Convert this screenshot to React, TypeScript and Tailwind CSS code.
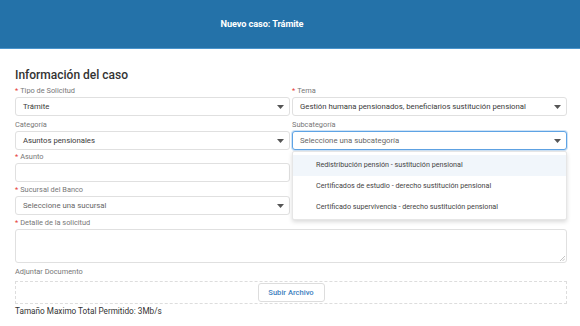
import React from "react";

const font = { fontFamily: "Roboto, 'Liberation Sans', sans-serif" };

function Label({ text, req }: { text: string; req?: boolean }) {
	return (
		<div className="h-[10px] mb-[1px] flex items-center text-[7.4px] leading-none text-[#777]">
			{req ? <span className="text-[#e53935] mr-[2px]">*</span> : null}
			{text}
		</div>
	);
}

function Arrow() {
	return (
		<svg width="7" height="4" viewBox="0 0 7 4" className="shrink-0">
			<path d="M0 0h7L3.5 4z" fill="#555" />
		</svg>
	);
}

function Select({
	value,
	placeholder,
	focused,
}: {
	value?: string;
	placeholder?: string;
	focused?: boolean;
}) {
	return (
		<div
			className={
				"h-[19px] rounded-[3px] border bg-white flex items-center justify-between pl-[7px] pr-[5px] text-[7.75px] " +
				(focused
					? "border-[#5ea3e4] shadow-[0_0_0_1px_#cfe3f6]"
					: "border-[#e0e0e0]")
			}
		>
			<span className={value ? "text-[#3a3a3a]" : "text-[#666]"}>
				{value ?? placeholder}
			</span>
			<Arrow />
		</div>
	);
}

export default function App() {
	const options = [
		"Redistribución pensión - sustitución pensional",
		"Certificados de estudio - derecho sustitución pensional",
		"Certificado supervivencia - derecho sustitución pensional",
	];

	return (
		<div className="w-[580px] h-[326px] bg-white overflow-hidden" style={font}>
			<div className="h-[49px] bg-[#2472a9] border-b border-[#4a94cc] flex items-center justify-center pr-[56px]">
				<h1 className="text-white font-bold text-[9.2px] tracking-[-0.1px]">
					Nuevo caso: Trámite
				</h1>
			</div>

			<div className="pl-[15px] pr-[13px]">
				<h2 className="mt-[19px] h-[14px] leading-[14px] text-[12px] font-medium text-[#333]">
					Información del caso
				</h2>

				<div className="grid grid-cols-2 gap-x-[2px] mt-[4px]">
					<div>
						<Label text="Tipo de Solicitud" req />
						<Select value="Trámite" />
					</div>
					<div>
						<Label text="Tema" req />
						<Select value="Gestión humana pensionados, beneficiarios sustitución pensional" />
					</div>

					<div className="mt-[4px]">
						<Label text="Categoría" />
						<Select value="Asuntos pensionales" />
					</div>
					<div className="mt-[4px] relative">
						<Label text="Subcategoría" />
						<Select placeholder="Seleccione una subcategoría" focused />
						<div className="absolute left-0 right-0 top-[calc(100%+1px)] z-10 bg-white border border-[#e6e6e6] rounded-[2px] shadow-[0_2px_4px_rgba(0,0,0,0.15)] pt-[3px] pb-[1px]">
							{options.map((o, i) => (
								<div
									key={o}
									className={
										"h-[21px] flex items-center pl-[23px] text-[7.2px] text-[#444] " +
										(i === 0 ? "bg-[#f1f6fb]" : "")
									}
								>
									{o}
								</div>
							))}
						</div>
					</div>

					<div className="mt-[2px]">
						<Label text="Asunto" req />
						<div className="h-[19px] rounded-[3px] border border-[#e0e0e0]" />
					</div>
					<div />

					<div className="mt-[3px]">
						<Label text="Sucursal del Banco" req />
						<Select placeholder="Seleccione una sucursal" />
					</div>
					<div />
				</div>

				<div className="mt-[3px]">
					<Label text="Detalle de la solicitud" req />
					<div className="h-[34px] rounded-[3px] border border-[#e0e0e0] relative">
						<svg width="5" height="5" viewBox="0 0 5 5" className="absolute right-[1px] bottom-[1px]">
							<path d="M5 0L0 5M5 2.5L2.5 5" stroke="#aaa" strokeWidth="0.7" />
						</svg>
					</div>
				</div>

				<div className="mt-[4px]">
					<div className="h-[10px] flex items-center text-[7.4px] leading-none text-[#777]">
						Adjuntar Documento
					</div>
					<div className="mt-[4px] h-[23px] border border-dashed border-[#ddd] flex items-center justify-center">
						<button className="h-[19px] w-[67px] rounded-[3px] border border-[#ddd] bg-white text-[7.6px] font-medium text-[#3d7fc0]">
							Subir Archivo
						</button>
					</div>
				</div>

				<div className="mt-[1px] text-[8.2px] leading-[12px] text-[#333]">
					Tamaño Maximo Total Permitido: 3Mb/s
				</div>
			</div>
		</div>
	);
}
